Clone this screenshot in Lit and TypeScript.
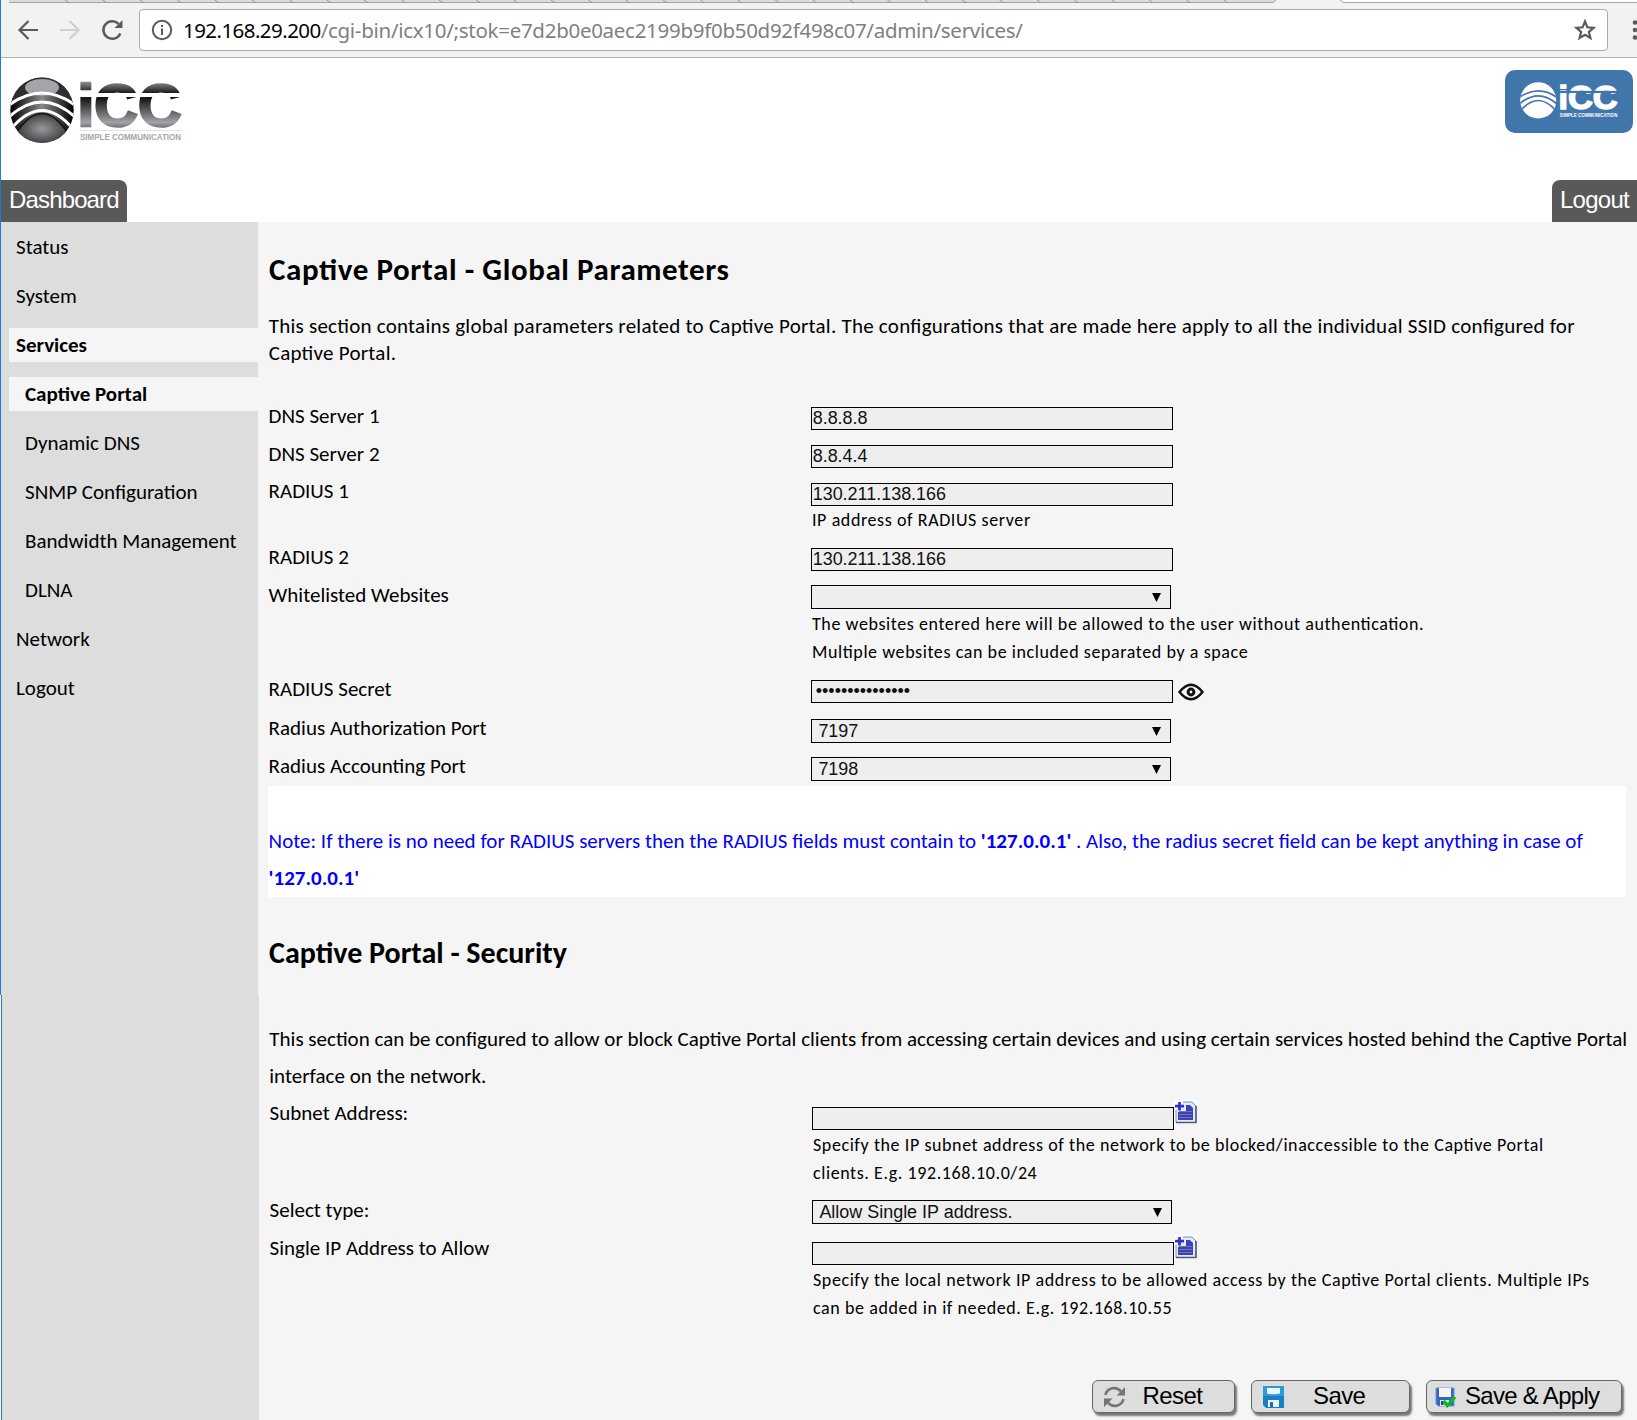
import { LitElement, html, css, svg, nothing } from "lit";
import { customElement } from "lit/decorators.js";
import { classMap } from "lit/directives/class-map.js";
import { styleMap } from "lit/directives/style-map.js";

interface Field {
  label: string;
  kind: "input" | "password" | "select";
  value: string;
  height: number;
  shift?: number;
  help?: string[];
  add?: boolean;
}

const NAV = [
  { label: "Status" },
  { label: "System" },
  { label: "Services", active: true },
  { label: "Captive Portal", active: true, sub: true },
  { label: "Dynamic DNS", sub: true },
  { label: "SNMP Configuration", sub: true },
  { label: "Bandwidth Management", sub: true },
  { label: "DLNA", sub: true },
  { label: "Network" },
  { label: "Logout" },
];

const GLOBAL_FIELDS: Field[] = [
  { label: "DNS Server 1", kind: "input", value: "8.8.8.8", height: 38 },
  { label: "DNS Server 2", kind: "input", value: "8.8.4.4", height: 38 },
  { label: "RADIUS 1", kind: "input", value: "130.211.138.166", height: 65, shift: -1, help: ["IP address of RADIUS server"] },
  { label: "RADIUS 2", kind: "input", value: "130.211.138.166", height: 37 },
  {
    label: "Whitelisted Websites", kind: "select", value: "", height: 95, shift: 1,
    help: [
      "The websites entered here will be allowed to the user without authentication.",
      "Multiple websites can be included separated by a space",
    ],
  },
  { label: "RADIUS Secret", kind: "password", value: "•••••••••••••••", height: 39 },
  { label: "Radius Authorization Port", kind: "select", value: "7197", height: 38 },
  { label: "Radius Accounting Port", kind: "select", value: "7198", height: 29 },
];

const SECURITY_FIELDS: Field[] = [
  {
    label: "Subnet Address:", kind: "input", value: "", height: 93, shift: -3, add: true,
    help: [
      "Specify the IP subnet address of the network to be blocked/inaccessible to the Captive Portal",
      "clients. E.g. 192.168.10.0/24",
    ],
  },
  { label: "Select type:", kind: "select", value: "Allow Single IP address.", height: 42, shift: 1 },
  {
    label: "Single IP Address to Allow", kind: "input", value: "", height: 138, shift: -3, add: true,
    help: [
      "Specify the local network IP address to be allowed access by the Captive Portal clients. Multiple IPs",
      "can be added in if needed. E.g. 192.168.10.55",
    ],
  },
];

@customElement("icc-logo")
class IccLogo extends LitElement {
  static properties = { light: { type: Boolean } };
  declare light: boolean;
  static styles = css`
    :host { display: block; }
    svg { display: block; width: 100%; height: 100%; overflow: visible; }
    .word { font: bold 60px "Liberation Sans", Arial, sans-serif; stroke-width: 2.6px; }
    .tag { font: bold 8.6px "Liberation Sans", Arial, sans-serif; }
  `;
  render() {
    const l = this.light;
    const gap = l ? "#4176ab" : "#fff";
    const ink = l ? "#fff" : "url(#w)";
    return html`<svg viewBox="0 0 172 67" preserveAspectRatio="none">
      <defs>
        <radialGradient id="d" cx=".5" cy=".5" r=".6">
          <stop offset="0" stop-color="#98999c" /><stop offset="1" stop-color="#2c2c2e" />
        </radialGradient>
        <linearGradient id="s" x1="0" y1="0" x2="1" y2="0">
          <stop offset="0" stop-color="#000" /><stop offset=".5" stop-color="#85868a" /><stop offset="1" stop-color="#000" />
        </linearGradient>
        <linearGradient id="w" gradientUnits="userSpaceOnUse" x1="0" y1="4" x2="0" y2="50">
          <stop offset="0" stop-color="#97989b" /><stop offset=".25" stop-color="#1d1d1f" />
          <stop offset=".38" stop-color="#161617" /><stop offset=".9" stop-color="#a2a3a7" /><stop offset="1" stop-color="#77787b" />
        </linearGradient>
        <clipPath id="c"><ellipse cx="32" cy="33.2" rx="31.7" ry="32.8" /></clipPath>
      </defs>
      <g clip-path="url(#c)">
        <rect width="64" height="67" fill=${l ? "#fff" : "url(#s)"} />
        ${l ? nothing : svg`
          <path d="M0 0H64V29Q32 5 0 29Z" fill="#2f2f31" />
          <ellipse cx="32" cy="10.500" rx="17" ry="8.500" fill="#a4a5a8" />
          <path d="M7 55Q32 18 57 55L50 67H14Z" fill="url(#d)" stroke="#111" stroke-width="1.5" />`}
        <g fill="none" stroke=${gap} stroke-width="3">
          <path d="M-1 28Q32 4 65 28" /><path d="M-1 40Q32 10 65 40" /><path d="M1 52Q32 15 63 52" />
          <path d="M2 48L14 68M62 48L50 68" stroke-width="1.500" />
        </g>
      </g>
      <text class="word" x="67.500" y="48.500" textLength="104" lengthAdjust="spacingAndGlyphs" fill=${ink} stroke=${ink}>iCC</text>
      <rect x="69" y="16" width="104" height="4" fill=${gap} />
      ${l ? nothing : svg`<path d="M70 53.5H172" stroke="#e4e4e4" />`}
      <text class="tag" x="70" y="62.5" textLength="101" lengthAdjust="spacingAndGlyphs" fill=${l ? "#fff" : "#a6a6a8"}>SIMPLE COMMUNICATION</text>
    </svg>`;
  }
}

@customElement("browser-bar")
class BrowserBar extends LitElement {
  static styles = css`
    :host { display: block; background: #f2f2f2; height: 57px; border-bottom: 1px solid #b0b0b0; overflow: hidden; }
    .tabs { display: block; width: 100%; height: 3px; }
    .row { display: flex; align-items: center; height: 42px; padding: 6px 0 0 16px; }
    .row > svg { flex: none; }
    .back { margin-right: 20px; }
    .fwd { margin-right: 20px; }
    .reload { margin-right: 15px; }
    .box { flex: none; box-sizing: border-box; width: 1469px; height: 42px; border: 1px solid #aaa; border-radius: 4px;
      background: #fff; display: flex; align-items: center; padding: 0 10px 0 11px; }
    .url { flex: 1; margin-left: 10px; font: 20.5px/40px "Noto Sans", sans-serif; color: #808080; letter-spacing: -.285px; white-space: nowrap; padding-bottom: 1px; }
    .host { color: #000; letter-spacing: -.56px; }
    .dots { margin-left: 24px; }
  `;
  render() {
    const seps = Array.from({ length: 32 }, (_, i) => 64 + i * 37.4);
    return html`
      <svg class="tabs" viewBox="0 0 1637 3">
        <path d="M8 0H1275V2H8Z" fill="#dcdcdc" />
        <path d="M8 2.5H1273L1276 0M1340 0L1343 2.5H1637" stroke="#a3a3a3" fill="none" />
        <path d="M1343 0H1637V2H1343Z" fill="#fff" />
        <path d=${seps.map((x) => `M${x} 0l4 2.5`).join("")} stroke="#9a9a9a" />
      </svg>
      <div class="row">
        <svg class="back" width="22" height="22" fill="none" stroke="#5a5a5a" stroke-width="2.2"><path d="M21 11H3M11.5 2L2.5 11L11.5 20" /></svg>
        <svg class="fwd" width="22" height="22" fill="none" stroke="#d0d0d0" stroke-width="2.2"><path d="M1 11H19M10.500 2L19.500 11L10.500 20" /></svg>
        <svg class="reload" width="23" height="22" fill="none" stroke="#5a5a5a" stroke-width="2.5"><path d="M19.300 14.500A8.800 8.800 0 1 1 17.500 4.800" /><path d="M21.500 1V9H13.500Z" fill="#5a5a5a" stroke="none" /></svg>
        <div class="box">
          <svg width="22" height="22" fill="none" stroke="#5a5a5a" stroke-width="2"><circle cx="11" cy="11" r="9.200" /><path d="M11 9.500V16M11 6V8" /></svg>
          <div class="url"><span class="host">192.168.29.200</span>/cgi-bin/icx10/;stok=e7d2b0e0aec2199b9f0b50d92f498c07/admin/services/</div>
          <svg width="24" height="24" fill="none" stroke="#5a5a5a" stroke-width="2.200"><path d="M12 3.500L14.400 9.300L20.600 9.800L15.900 13.900L17.400 20L12 16.700L6.600 20L8.100 13.900L3.400 9.800L9.600 9.300Z" /></svg>
        </div>
        <svg class="dots" width="6" height="22" fill="#5a5a5a"><circle cx="3" cy="3.500" r="2.300" /><circle cx="3" cy="11" r="2.300" /><circle cx="3" cy="18.500" r="2.300" /></svg>
      </div>`;
  }
}

@customElement("form-field")
class FormField extends LitElement {
  static properties = { field: { attribute: false } };
  declare field: Field;
  static styles = css`
    :host { display: block; }
    .row { display: grid; grid-template-columns: 543px 1fr; }
    .label { font: 21px/26px Carlito, Calibri, Lato, sans-serif; padding-left: .6px; }
    .line { display: flex; height: 23px; }
    .line.select { height: 24px; }
    input, .select-box { box-sizing: border-box; border: 1px solid #000; border-radius: 0; background: #eee; color: #111;
      font: 17.95px "Liberation Sans", Arial, sans-serif; margin: 0; }
    input { width: 362px; height: 23px; padding: 0 0 1px .7px; outline: none; }
    .secret { padding-left: 3.8px; }
    .select-box { width: 360px; height: 24px; padding: 0 9px 0 6.4px; display: flex; justify-content: space-between; align-items: center; }
    .help { font: 18px/28px Carlito, Calibri, Lato, sans-serif; letter-spacing: .585px; font-feature-settings: "liga" 1;
      padding-left: 1px; white-space: nowrap; }
    .help.after-select, .help.after-add { padding-top: 1px; }
    .eye { margin: 3px 0 0 5px; }
    .add { margin: -7px 0 0 0; }
  `;
  render() {
    const f = this.field;
    const select = f.kind === "select";
    return html`<div class="row" style=${styleMap({ height: f.height + "px" })}>
      <div class="label" style=${styleMap({ marginTop: -4 + (f.shift ?? 0) + "px" })}>${f.label}</div>
      <div>
        <div class=${classMap({ line: true, select })}>
          ${select
            ? html`<div class="select-box"><span>${f.value}</span><svg width="9" height="9"><path d="M0 0H9L4.500 9Z" /></svg></div>`
            : html`<input class=${classMap({ secret: f.kind === "password" })} .value=${f.value} readonly />`}
          ${f.kind === "password"
            ? html`<svg class="eye" width="26" height="18" fill="none" stroke="#111"><path d="M1.500 9Q13-5.500 24.500 9Q13 23.500 1.500 9Z" stroke-width="2.400" /><circle cx="13" cy="9" r="2.900" stroke-width="3" /></svg>`
            : nothing}
          ${f.add
            ? html`<svg class="add" width="23" height="24"><path d="M0 0H23V24H0Z" fill="#fff" /><path d="M9 2H18L22 6V22.500H2V10" fill="#e4ecf8" stroke="#6d8fae" /><path d="M22 6V22.500H2" fill="none" stroke="#4b5873" stroke-width="1.500" /><path d="M12 5H16L19 8V20H4V12H12Z" fill="#3b3fc4" /><path d="M5 11.500H18M5 14.500H18M5 17.500H18" stroke="#77778f" /><path d="M5.500 2V10.500M1 6.200H10" stroke="#3333cc" stroke-width="2.800" /></svg>`
            : nothing}
        </div>
        ${f.help
          ? html`<div class=${classMap({ help: true, "after-select": select, "after-add": !!f.add })}>${f.help.map((t) => html`<div>${t}</div>`)}</div>`
          : nothing}
      </div>
    </div>`;
  }
}

@customElement("app-root")
class AppRoot extends LitElement {
  static styles = css`
    :host { display: block; width: 1637px; height: 1420px; overflow: hidden; background: #fff; color: #000;
      font: 21px/27px Carlito, Calibri, Lato, sans-serif; }
    .frame { box-sizing: border-box; height: 1420px; padding-left: 1px; background: linear-gradient(#1b7fd6, #1b7fd6) 0 0 / 1px 995px no-repeat;
      display: flex; flex-direction: column; }
    header { box-sizing: border-box; height: 122px; display: flex; justify-content: space-between; padding: 12px 4px 0 9px; }
    .logo { width: 172px; height: 67px; margin-top: 7px; }
    .badge { box-sizing: border-box; width: 128px; height: 63px; border-radius: 10px; background: #4176ab; padding: 12px 15px; }
    .badge icc-logo { width: 98px; height: 37px; }
    .tabs { display: flex; justify-content: space-between; height: 42px; }
    .tab { box-sizing: border-box; background: #595959; color: #fff; font: 24px/39px "Liberation Sans", Arial, sans-serif; white-space: nowrap; }
    .dash { width: 126px; padding-left: 8px; letter-spacing: -.85px; border-top-right-radius: 8px; }
    .out { width: 85px; padding-left: 8px; letter-spacing: -.75px; border-top-left-radius: 8px; }
    .body { flex: 1; display: flex; }
    nav { box-sizing: border-box; width: 257px; background: linear-gradient(#1b7fd6, #1b7fd6) 0 773px / 1px 425px no-repeat #ddd;
      padding: 8px 0 0 8px; display: flex; flex-direction: column; gap: 15px; }
    .item { height: 34px; line-height: 34px; padding-left: 7px; white-space: nowrap; }
    .sub { padding-left: 16px; }
    .active { background: #f5f5f5; font-weight: bold; }
    main { flex: 1; background: linear-gradient(#ddd, #ddd) 0 773px / 1px 425px no-repeat #f5f5f5; padding: 0 11px 0 10px; min-width: 0; }
    h2 { margin: 0; font-size: 31px; line-height: 40px; padding: 27px 0 0 1px; letter-spacing: .59px; font-feature-settings: "liga" 1; white-space: nowrap; }
    .intro { margin: 23.5px 0 0; padding-left: .7px; letter-spacing: .243px; font-feature-settings: "liga" 1; white-space: nowrap; }
    .fields { margin-top: 40.5px; }
    .note { background: #fff; color: #00f; line-height: 37px; padding: 37px 0 0 .6px; height: 74px; white-space: nowrap; }
    .security h2 { font-size: 30px; line-height: 40px; padding-top: 36px; letter-spacing: 0; }
    .security p { margin: 48px -20px 0 1.3px; line-height: 37px; white-space: nowrap; }
    .security .fields { margin: 12px 0 0 1px; }
    .actions { display: flex; justify-content: flex-end; gap: 16px; padding-right: 4px; }
    .btn { box-sizing: border-box; height: 33px; border: 1.500px solid #666; border-radius: 6px; background: #ddd; box-shadow: 2px 3px 2px #777;
      display: flex; align-items: center; font: 24px/28px "Liberation Sans", Arial, sans-serif; letter-spacing: -.6px; white-space: nowrap; padding-left: 10px; }
    .btn span { padding-bottom: 2px; }
    .reset { width: 143px; gap: 16.500px; }
    .save { width: 159px; gap: 29px; padding-left: 11px; }
    .apply { width: 196px; gap: 8px; padding-left: 8px; letter-spacing: -.7px; }
  `;
  render() {
    return html`
      <div class="frame">
        <browser-bar></browser-bar>
        <header>
          <icc-logo class="logo"></icc-logo>
          <div class="badge"><icc-logo light></icc-logo></div>
        </header>
        <div class="tabs"><div class="tab dash">Dashboard</div><div class="tab out">Logout</div></div>
        <div class="body">
          <nav>${NAV.map((n) => html`<div class=${classMap({ item: true, sub: !!n.sub, active: !!n.active })}>${n.label}</div>`)}</nav>
          <main>
            <h2>Captive Portal - Global Parameters</h2>
            <p class="intro">This section contains global parameters related to Captive Portal. The configurations that are made here apply to all the individual SSID configured for<br />Captive Portal.</p>
            <div class="fields">${GLOBAL_FIELDS.map((f) => html`<form-field .field=${f}></form-field>`)}</div>
            <div class="note">Note: If there is no need for RADIUS servers then the RADIUS fields must contain to <b>'127.0.0.1'</b> . Also, the radius secret field can be kept anything in case of<br /><b>'127.0.0.1'</b></div>
            <section class="security">
              <h2>Captive Portal - Security</h2>
              <p>This section can be configured to allow or block Captive Portal clients from accessing certain devices and using certain services hosted behind the Captive Portal<br />interface on the network.</p>
              <div class="fields">${SECURITY_FIELDS.map((f) => html`<form-field .field=${f}></form-field>`)}</div>
            </section>
            <div class="actions">
              <div class="btn reset"><svg width="23" height="22" fill="none" stroke="#757575" stroke-width="2.600"><path d="M2.500 9A8.800 8.800 0 0 1 18 5.500M20.500 13A8.800 8.800 0 0 1 5 16.500" /><path d="M22 1V9.500H13.500ZM1 21V12.500H9.500Z" fill="#757575" stroke="none" /></svg><span>Reset</span></div>
              <div class="btn save"><svg width="21" height="22"><path d="M0 0H21V22H3L0 19Z" fill="#1a7fc1" /><path d="M0 0H21V10H0Z" fill="#2d9bd8" /><path d="M4 2H17V7.500Q10.500 9 4 7.500Z" fill="#eef6fb" /><path d="M5 14H16V21H5Z" fill="#e8f2f9" /><path d="M7 16H10V21H7Z" fill="#1a6fae" /></svg><span>Save</span></div>
              <div class="btn apply"><svg width="22" height="22"><path d="M1 2H19V20H3L1 18Z" fill="#3565c4" stroke="#6f93dc" /><path d="M4 2H16V11H4Z" fill="#f3f3f3" /><path d="M5 14H14V20H5Z" fill="#dfe6f4" /><path d="M6 15H8.500V19H6Z" fill="#27408c" /><path d="M8.500 15L12.500 19.500L20 11" fill="none" stroke="#12b812" stroke-width="3.400" /></svg><span>Save &amp; Apply</span></div>
            </div>
          </main>
        </div>
      </div>`;
  }
}
